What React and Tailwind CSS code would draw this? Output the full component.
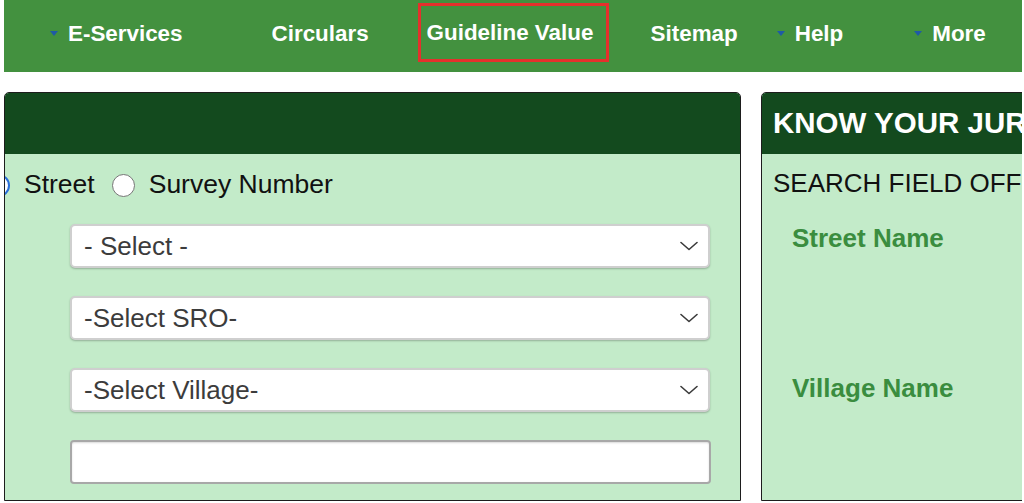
const Caret = () => (
  <span className="mr-[10px] inline-block h-0 w-0 border-x-[4px] border-t-[5px] border-x-transparent border-t-[#1f5aa6]" />
);

const Chevron = () => (
  <svg width="18" height="10" viewBox="0 0 18 10" fill="none" className="mr-[6px]">
    <polyline points="1,1.5 9,8.5 17,1.5" stroke="#3a3a3a" strokeWidth="1.6" strokeLinecap="round" strokeLinejoin="round" />
  </svg>
);

const SelectBox = ({ label }) => (
  <div className="ml-[65px] flex h-[44px] w-[640px] items-center justify-between rounded-[5px] border-2 border-[#cfcfcf] bg-white pl-[12px] pr-[4px] shadow-[0_1px_2px_rgba(0,0,0,0.25)]">
    <span className="text-[26px] leading-none text-[#3c3c3c]">{label}</span>
    <Chevron />
  </div>
);

const App = () => {
  return (
    <div
      className="h-[503px] w-[1024px] overflow-hidden bg-white pl-[4px] pr-[2px]"
      style={{ fontFamily: '"Liberation Sans", Arial, sans-serif' }}
    >
      <nav className="flex h-[72px] items-center bg-[#43913f] pb-[4px] text-[22.4px] font-bold text-white">
        <div className="ml-[46px] flex items-center">
          <Caret />
          <span>E-Services</span>
        </div>
        <span className="ml-[89px]">Circulars</span>
        <div className="ml-[49px] mt-[3px] flex h-[59px] w-[191px] items-center self-start border-[3px] border-[#e5302c] pl-[6px]">
          Guideline Value
        </div>
        <span className="ml-[42px]">Sitemap</span>
        <div className="ml-[39px] flex items-center">
          <Caret />
          <span>Help</span>
        </div>
        <div className="ml-[71px] flex items-center">
          <Caret />
          <span>More</span>
        </div>
      </nav>

      <div className="mt-[20px] flex h-[409px] gap-[20px] overflow-hidden">
        <section className="flex w-[737px] shrink-0 flex-col overflow-hidden rounded-t-[5px] border border-[#1d1d1d]">
          <div className="h-[61px] shrink-0 bg-[#134a1e]" />
          <div className="flex-1 bg-[#c3ebc9] pt-[16px]">
            <div className="flex h-[30px] items-center text-[26.5px] text-[#111]">
              <span className="-ml-[18px] flex h-[23px] w-[23px] items-center justify-center rounded-full border-2 border-[#2a6fdb] bg-white">
                <span className="h-[11px] w-[11px] rounded-full bg-[#2a6fdb]" />
              </span>
              <span className="ml-[14px]">Street</span>
              <span className="ml-[17px] h-[23px] w-[23px] rounded-full border border-[#767676] bg-white" />
              <span className="ml-[14px]">Survey Number</span>
            </div>
            <div className="mt-[24px] flex flex-col gap-[28px]">
              <SelectBox label="- Select -" />
              <SelectBox label="-Select SRO-" />
              <SelectBox label="-Select Village-" />
              <div className="ml-[65px] h-[44px] w-[641px] rounded-[4px] border-2 border-[#a8a8a8] bg-white shadow-[inset_0_1px_2px_rgba(0,0,0,0.15)]" />
            </div>
          </div>
        </section>

        <section className="flex w-[400px] shrink-0 flex-col overflow-hidden rounded-t-[5px] border border-[#1d1d1d]">
          <div className="flex h-[61px] shrink-0 items-center whitespace-nowrap bg-[#134a1e] pl-[11px] text-[29.5px] font-bold text-white">
            KNOW YOUR JURISDICTION
          </div>
          <div className="flex-1 whitespace-nowrap bg-[#c3ebc9] pl-[11px] pt-[15px]">
            <div className="text-[26px] leading-[28px] text-[#111]">SEARCH FIELD OFFICE</div>
            <div className="ml-[19px] mt-[27px] text-[26px] font-bold leading-[28px] text-[#3a8d3f]">Street Name</div>
            <div className="ml-[19px] mt-[122px] text-[26px] font-bold leading-[28px] text-[#3a8d3f]">Village Name</div>
          </div>
        </section>
      </div>
    </div>
  );
};

export default App;
